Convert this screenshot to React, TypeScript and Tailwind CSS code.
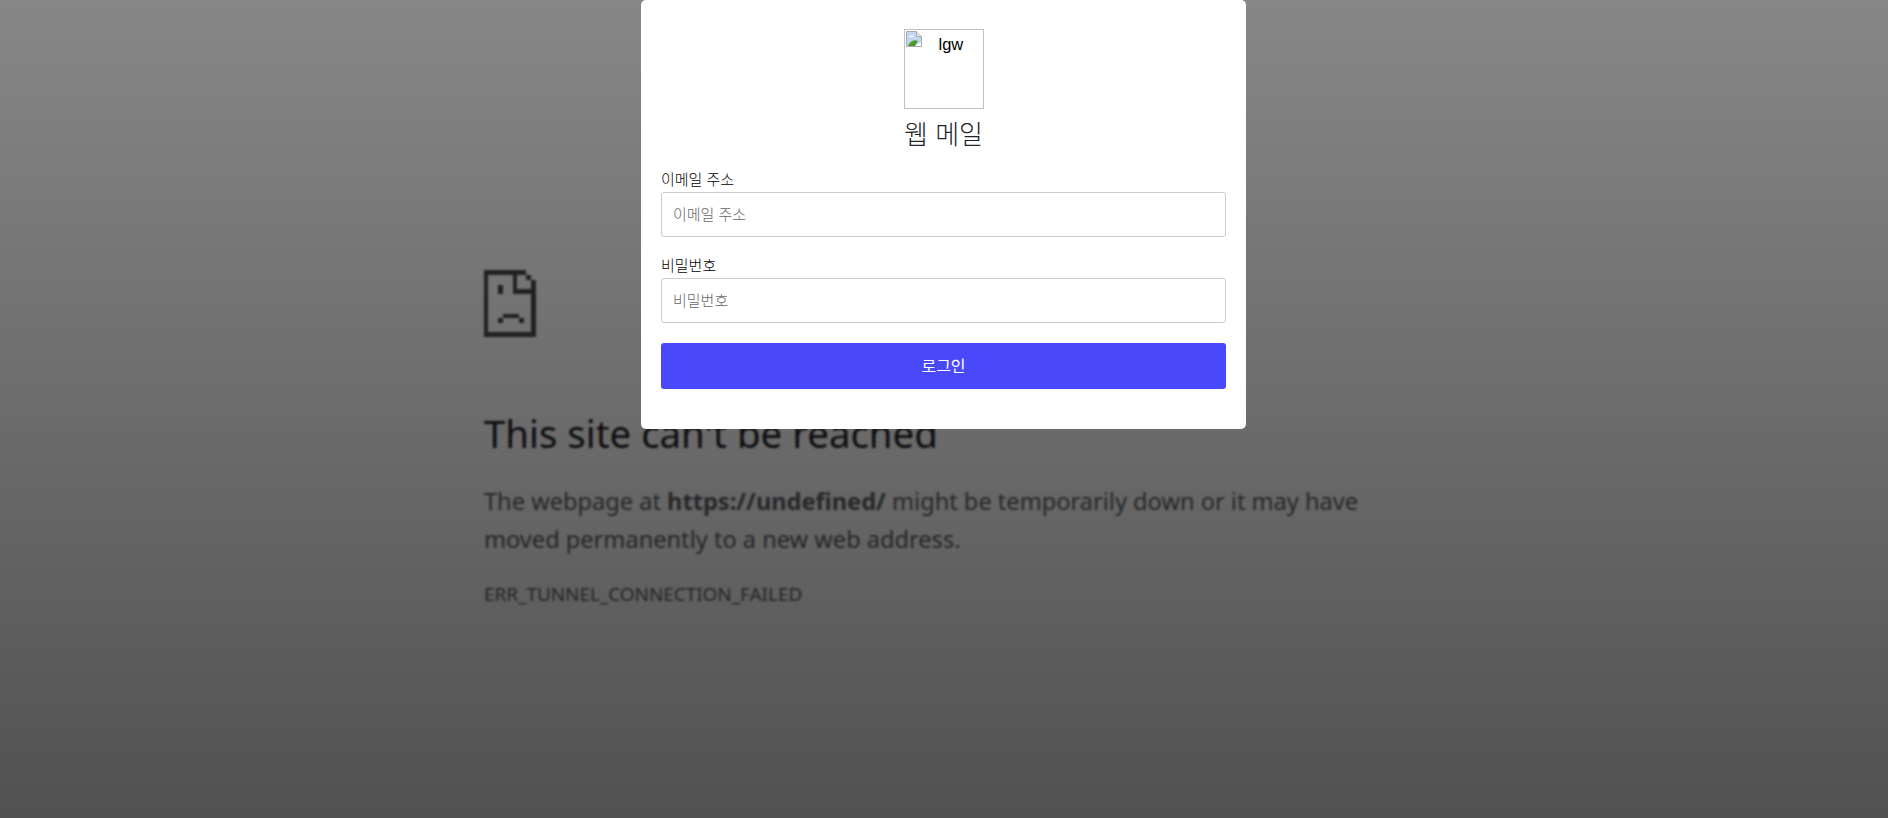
import React from 'react';

const BrokenImage = () => (
  <svg viewBox="0 0 16 16" className="w-4 h-4 shrink-0">
    <path d="M0.5 0.5H10.5L15.5 5.5V15.5H0.5Z" fill="#fff" stroke="#a8a8a8" />
    <path d="M1 1H10V6H15V11L9 15H1Z" fill="#c3d7f2" />
    <path d="M3 6C4 4 7 4 8 6Z" fill="#fff" />
    <path d="M2 15C4 10 8 8 12 10L9 15Z" fill="#4c9a2a" />
    <path d="M10.5 0.5V5.5H15.5" fill="#e8e8e8" stroke="#a8a8a8" />
  </svg>
);

const SadFile = () => (
  <svg viewBox="42 30 155 200" className="w-[52px] h-[67px]" fill="#45494e" shapeRendering="crispEdges">
    <rect x="42" y="30" width="13" height="200" />
    <rect x="42" y="30" width="126" height="15" />
    <rect x="183" y="60" width="14" height="170" />
    <rect x="42" y="216" width="155" height="14" />
    <rect x="128" y="45" width="13" height="57" />
    <rect x="128" y="88" width="69" height="14" />
    <rect x="168" y="45" width="15" height="15" />
    <rect x="85" y="74" width="13" height="28" />
    <rect x="98" y="160" width="47" height="14" />
    <rect x="84" y="174" width="14" height="14" />
    <rect x="145" y="174" width="15" height="14" />
  </svg>
);

const Field = ({ label, type }: { label: string; type: string }) => (
  <div className="flex flex-col">
    <label className="text-[15px] font-light leading-[20px] h-[20px] mb-[2px] text-black">{label}</label>
    <input
      type={type}
      placeholder={label}
      className="w-full h-[45px] px-[11px] text-[15px] font-light bg-white border border-[#cccccc] rounded-[3px] outline-none placeholder:text-[#666666]"
    />
  </div>
);

export default function App() {
  return (
    <div className="relative w-full h-[818px] overflow-hidden bg-white font-['Liberation_Sans','Noto_Sans_CJK_KR',sans-serif]">
      {/* Error page behind the overlay */}
      <div className="w-[920px] pt-[270px] ml-[484px] font-['Noto_Sans',sans-serif] text-[#5f6368]">
        <SadFile />
        <h1 className="mt-[74px] text-[38.4px] leading-[45px] font-normal text-[#202124]">This site can't be reached</h1>
        <p className="mt-[27px] text-[23.6px] leading-[37.5px]">
          The webpage at <b>https://undefined/</b> might be temporarily down or it may have moved permanently to a new web address.
        </p>
        <div className="mt-[22px] text-[18.9px] leading-[28px]">ERR_TUNNEL_CONNECTION_FAILED</div>
      </div>

      {/* Dark overlay */}
      <div className="absolute inset-0 bg-gradient-to-b from-[#00000078] to-[#000000ae] backdrop-blur-[1px]" />

      {/* Login card */}
      <div className="absolute top-0 left-[641px] w-[605px] h-[429px] bg-white rounded-[5px] px-5">
        <div className="flex flex-col items-center pt-[29px]">
          <div className="flex w-20 h-20 border border-[#c0c0c0] pl-px pt-px">
            <BrokenImage />
            <span className="ml-[17px] mt-px text-[16.5px] leading-[24px] text-black">lgw</span>
          </div>
          <h2 className="mt-[10px] text-[26px] font-light leading-[32px] text-[#212529]">웹 메일</h2>
        </div>
        <div className="mt-[19px] flex flex-col gap-[19px]">
          <Field label="이메일 주소" type="text" />
          <Field label="비밀번호" type="password" />
        </div>
        <button
          type="button"
          className="mt-[20px] w-full h-[46px] pt-0.5 bg-[#4949fb] text-white text-base font-normal rounded-[3px]"
        >
          로그인
        </button>
      </div>
    </div>
  );
}
